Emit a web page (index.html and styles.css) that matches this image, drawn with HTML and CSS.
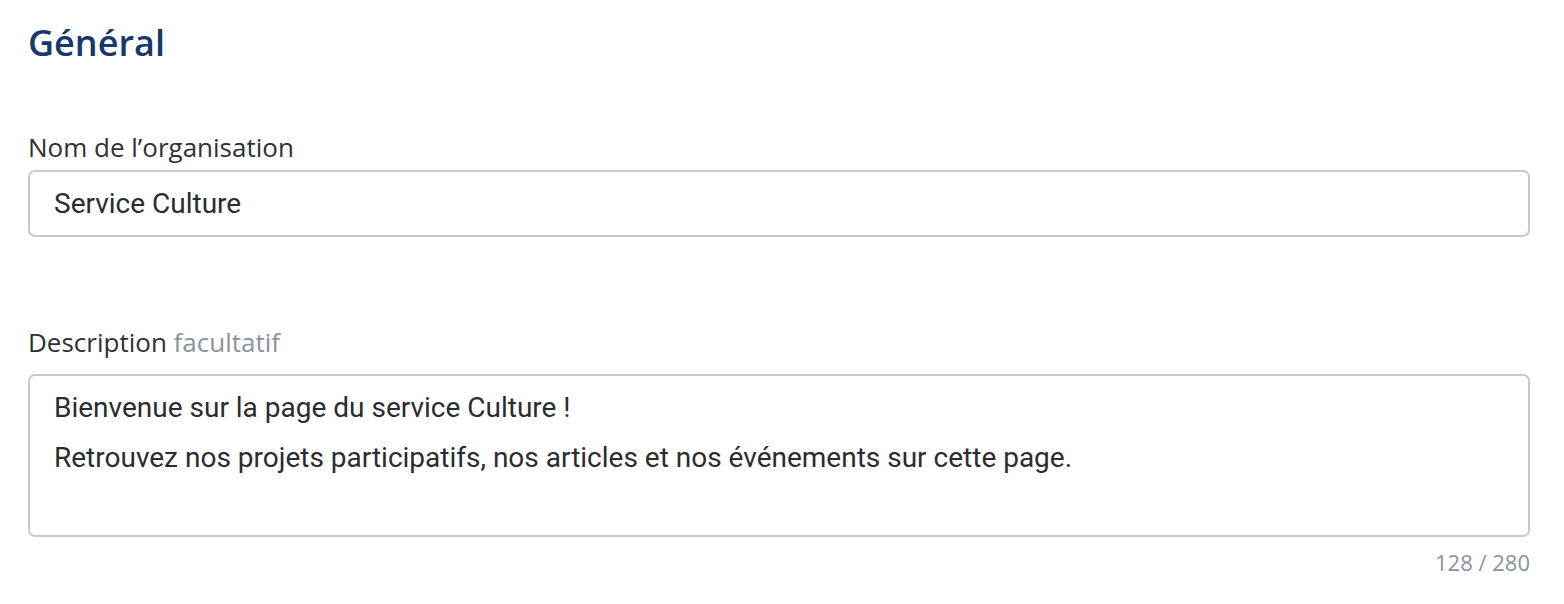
FILE: index.html
```html
<!DOCTYPE html>
<html lang="fr">
<head>
<meta charset="utf-8">
<title>Général</title>
<link rel="stylesheet" href="styles.css">
</head>
<body>
<main class="settings">
  <h2 class="section-title">Général</h2>

  <div class="field field-name">
    <label class="field-label" for="org-name">Nom de l’organisation</label>
    <div class="input" id="org-name">Service Culture</div>
  </div>

  <div class="field field-desc">
    <label class="field-label" for="org-desc">Description <span class="optional">facultatif</span></label>
    <div class="textarea" id="org-desc">
      <p>Bienvenue sur la page du service Culture !</p>
      <p>Retrouvez nos projets participatifs, nos articles et nos événements sur cette page.</p>
    </div>
    <div class="counter">128 / 280</div>
  </div>
</main>
</body>
</html>
```

FILE: styles.css
```css
html, body {
  margin: 0;
  padding: 0;
  background: #ffffff;
}

.settings {
  width: 1502px;
  margin-left: 28px;
  padding-top: 19px;
  font-family: "Open Sans", "Liberation Sans", sans-serif;
  color: #2f3134;
}

.section-title {
  margin: 0;
  font-size: 36px;
  line-height: 48px;
  font-weight: 600;
  color: #17386b;
}

.field {
  display: flex;
  flex-direction: column;
}

.field-name {
  margin-top: 64px;
  gap: 7px;
}

.field-desc {
  margin-top: 89px;
  gap: 16px;
}

.field-label {
  font-size: 26px;
  line-height: 32px;
  color: #2f3134;
}

.optional {
  color: #8a939d;
}

.input,
.textarea {
  border: 2px solid #c6c9ce;
  border-radius: 7px;
  box-sizing: border-box;
  font-family: Roboto, "Liberation Sans", sans-serif;
  font-size: 28px;
  color: #2a2c30;
  background: #fff;
}

.input {
  height: 67px;
  padding: 0 24px;
  display: flex;
  align-items: center;
}

.textarea {
  height: 163px;
  padding: 7px 24px 6px;
  line-height: 50px;
}

.textarea p {
  margin: 0;
}

.counter {
  align-self: flex-end;
  margin-top: -5px;
  font-size: 22px;
  line-height: 28px;
  color: #8a939d;
}
```
